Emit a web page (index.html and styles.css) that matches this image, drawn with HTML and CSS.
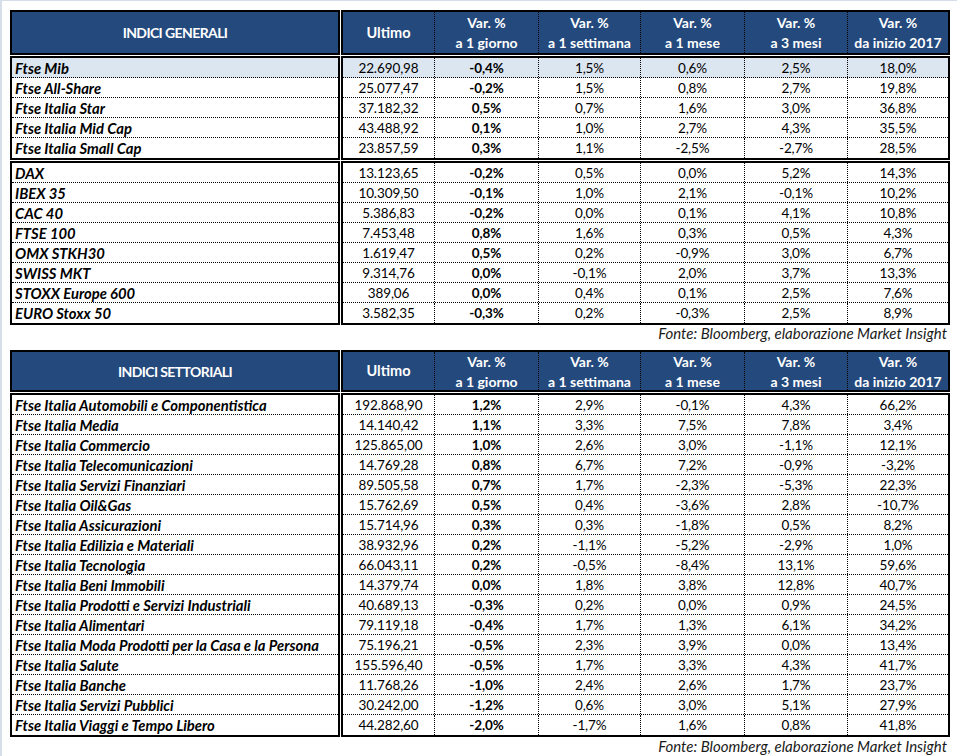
FILE: index.html
```html
<!DOCTYPE html>
<html lang="it">
<head>
<meta charset="utf-8">
<title>Indici</title>
<link rel="stylesheet" href="styles.css">
</head>
<body>
<div class="page">
  <div class="sect head h1">
    <div class="box names"><div class="title">INDICI GENERALI</div></div>
    <div class="box vals">
      <div class="hrow">
        <div class="c w1 single">Ultimo</div>
        <div class="c w2"><span>Var. %</span><span>a 1 giorno</span></div>
        <div class="c w3"><span>Var. %</span><span>a 1 settimana</span></div>
        <div class="c w4"><span>Var. %</span><span>a 1 mese</span></div>
        <div class="c w5"><span>Var. %</span><span>a 3 mesi</span></div>
        <div class="c w6"><span>Var. %</span><span>da inizio 2017</span></div>
      </div>
    </div>
  </div>
  <div class="sect">
    <div class="box names">
      <div class="row sel">Ftse Mib</div>
      <div class="row">Ftse All-Share</div>
      <div class="row">Ftse Italia Star</div>
      <div class="row">Ftse Italia Mid Cap</div>
      <div class="row">Ftse Italia Small Cap</div>
    </div>
    <div class="box vals">
      <div class="row sel"><div class="c w1">22.690,98</div><div class="c w2 b">-0,4%</div><div class="c w3">1,5%</div><div class="c w4">0,6%</div><div class="c w5">2,5%</div><div class="c w6">18,0%</div></div>
      <div class="row"><div class="c w1">25.077,47</div><div class="c w2 b">-0,2%</div><div class="c w3">1,5%</div><div class="c w4">0,8%</div><div class="c w5">2,7%</div><div class="c w6">19,8%</div></div>
      <div class="row"><div class="c w1">37.182,32</div><div class="c w2 b">0,5%</div><div class="c w3">0,7%</div><div class="c w4">1,6%</div><div class="c w5">3,0%</div><div class="c w6">36,8%</div></div>
      <div class="row"><div class="c w1">43.488,92</div><div class="c w2 b">0,1%</div><div class="c w3">1,0%</div><div class="c w4">2,7%</div><div class="c w5">4,3%</div><div class="c w6">35,5%</div></div>
      <div class="row"><div class="c w1">23.857,59</div><div class="c w2 b">0,3%</div><div class="c w3">1,1%</div><div class="c w4">-2,5%</div><div class="c w5">-2,7%</div><div class="c w6">28,5%</div></div>
    </div>
  </div>
  <div class="sect">
    <div class="box names">
      <div class="row">DAX</div>
      <div class="row">IBEX 35</div>
      <div class="row">CAC 40</div>
      <div class="row">FTSE 100</div>
      <div class="row">OMX STKH30</div>
      <div class="row">SWISS MKT</div>
      <div class="row">STOXX Europe 600</div>
      <div class="row">EURO Stoxx 50</div>
    </div>
    <div class="box vals">
      <div class="row"><div class="c w1">13.123,65</div><div class="c w2 b">-0,2%</div><div class="c w3">0,5%</div><div class="c w4">0,0%</div><div class="c w5">5,2%</div><div class="c w6">14,3%</div></div>
      <div class="row"><div class="c w1">10.309,50</div><div class="c w2 b">-0,1%</div><div class="c w3">1,0%</div><div class="c w4">2,1%</div><div class="c w5">-0,1%</div><div class="c w6">10,2%</div></div>
      <div class="row"><div class="c w1">5.386,83</div><div class="c w2 b">-0,2%</div><div class="c w3">0,0%</div><div class="c w4">0,1%</div><div class="c w5">4,1%</div><div class="c w6">10,8%</div></div>
      <div class="row"><div class="c w1">7.453,48</div><div class="c w2 b">0,8%</div><div class="c w3">1,6%</div><div class="c w4">0,3%</div><div class="c w5">0,5%</div><div class="c w6">4,3%</div></div>
      <div class="row"><div class="c w1">1.619,47</div><div class="c w2 b">0,5%</div><div class="c w3">0,2%</div><div class="c w4">-0,9%</div><div class="c w5">3,0%</div><div class="c w6">6,7%</div></div>
      <div class="row"><div class="c w1">9.314,76</div><div class="c w2 b">0,0%</div><div class="c w3">-0,1%</div><div class="c w4">2,0%</div><div class="c w5">3,7%</div><div class="c w6">13,3%</div></div>
      <div class="row"><div class="c w1">389,06</div><div class="c w2 b">0,0%</div><div class="c w3">0,4%</div><div class="c w4">0,1%</div><div class="c w5">2,5%</div><div class="c w6">7,6%</div></div>
      <div class="row"><div class="c w1">3.582,35</div><div class="c w2 b">-0,3%</div><div class="c w3">0,2%</div><div class="c w4">-0,3%</div><div class="c w5">2,5%</div><div class="c w6">8,9%</div></div>
    </div>
  </div>
  <p class="source s1">Fonte: Bloomberg, elaborazione Market Insight</p>

  <div class="sect head h2">
    <div class="box names"><div class="title">INDICI SETTORIALI</div></div>
    <div class="box vals">
      <div class="hrow">
        <div class="c w1 single">Ultimo</div>
        <div class="c w2"><span>Var. %</span><span>a 1 giorno</span></div>
        <div class="c w3"><span>Var. %</span><span>a 1 settimana</span></div>
        <div class="c w4"><span>Var. %</span><span>a 1 mese</span></div>
        <div class="c w5"><span>Var. %</span><span>a 3 mesi</span></div>
        <div class="c w6"><span>Var. %</span><span>da inizio 2017</span></div>
      </div>
    </div>
  </div>
  <div class="sect">
    <div class="box names">
      <div class="row">Ftse Italia Automobili e Componentistica</div>
      <div class="row">Ftse Italia Media</div>
      <div class="row">Ftse Italia Commercio</div>
      <div class="row">Ftse Italia Telecomunicazioni</div>
      <div class="row">Ftse Italia Servizi Finanziari</div>
      <div class="row">Ftse Italia Oil&amp;Gas</div>
      <div class="row">Ftse Italia Assicurazioni</div>
      <div class="row">Ftse Italia Edilizia e Materiali</div>
      <div class="row">Ftse Italia Tecnologia</div>
      <div class="row">Ftse Italia Beni Immobili</div>
      <div class="row">Ftse Italia Prodotti e Servizi Industriali</div>
      <div class="row">Ftse Italia Alimentari</div>
      <div class="row">Ftse Italia Moda Prodotti per la Casa e la Persona</div>
      <div class="row">Ftse Italia Salute</div>
      <div class="row">Ftse Italia Banche</div>
      <div class="row">Ftse Italia Servizi Pubblici</div>
      <div class="row">Ftse Italia Viaggi e Tempo Libero</div>
    </div>
    <div class="box vals">
      <div class="row"><div class="c w1">192.868,90</div><div class="c w2 b">1,2%</div><div class="c w3">2,9%</div><div class="c w4">-0,1%</div><div class="c w5">4,3%</div><div class="c w6">66,2%</div></div>
      <div class="row"><div class="c w1">14.140,42</div><div class="c w2 b">1,1%</div><div class="c w3">3,3%</div><div class="c w4">7,5%</div><div class="c w5">7,8%</div><div class="c w6">3,4%</div></div>
      <div class="row"><div class="c w1">125.865,00</div><div class="c w2 b">1,0%</div><div class="c w3">2,6%</div><div class="c w4">3,0%</div><div class="c w5">-1,1%</div><div class="c w6">12,1%</div></div>
      <div class="row"><div class="c w1">14.769,28</div><div class="c w2 b">0,8%</div><div class="c w3">6,7%</div><div class="c w4">7,2%</div><div class="c w5">-0,9%</div><div class="c w6">-3,2%</div></div>
      <div class="row"><div class="c w1">89.505,58</div><div class="c w2 b">0,7%</div><div class="c w3">1,7%</div><div class="c w4">-2,3%</div><div class="c w5">-5,3%</div><div class="c w6">22,3%</div></div>
      <div class="row"><div class="c w1">15.762,69</div><div class="c w2 b">0,5%</div><div class="c w3">0,4%</div><div class="c w4">-3,6%</div><div class="c w5">2,8%</div><div class="c w6">-10,7%</div></div>
      <div class="row"><div class="c w1">15.714,96</div><div class="c w2 b">0,3%</div><div class="c w3">0,3%</div><div class="c w4">-1,8%</div><div class="c w5">0,5%</div><div class="c w6">8,2%</div></div>
      <div class="row"><div class="c w1">38.932,96</div><div class="c w2 b">0,2%</div><div class="c w3">-1,1%</div><div class="c w4">-5,2%</div><div class="c w5">-2,9%</div><div class="c w6">1,0%</div></div>
      <div class="row"><div class="c w1">66.043,11</div><div class="c w2 b">0,2%</div><div class="c w3">-0,5%</div><div class="c w4">-8,4%</div><div class="c w5">13,1%</div><div class="c w6">59,6%</div></div>
      <div class="row"><div class="c w1">14.379,74</div><div class="c w2 b">0,0%</div><div class="c w3">1,8%</div><div class="c w4">3,8%</div><div class="c w5">12,8%</div><div class="c w6">40,7%</div></div>
      <div class="row"><div class="c w1">40.689,13</div><div class="c w2 b">-0,3%</div><div class="c w3">0,2%</div><div class="c w4">0,0%</div><div class="c w5">0,9%</div><div class="c w6">24,5%</div></div>
      <div class="row"><div class="c w1">79.119,18</div><div class="c w2 b">-0,4%</div><div class="c w3">1,7%</div><div class="c w4">1,3%</div><div class="c w5">6,1%</div><div class="c w6">34,2%</div></div>
      <div class="row"><div class="c w1">75.196,21</div><div class="c w2 b">-0,5%</div><div class="c w3">2,3%</div><div class="c w4">3,9%</div><div class="c w5">0,0%</div><div class="c w6">13,4%</div></div>
      <div class="row"><div class="c w1">155.596,40</div><div class="c w2 b">-0,5%</div><div class="c w3">1,7%</div><div class="c w4">3,3%</div><div class="c w5">4,3%</div><div class="c w6">41,7%</div></div>
      <div class="row"><div class="c w1">11.768,26</div><div class="c w2 b">-1,0%</div><div class="c w3">2,4%</div><div class="c w4">2,6%</div><div class="c w5">1,7%</div><div class="c w6">23,7%</div></div>
      <div class="row"><div class="c w1">30.242,00</div><div class="c w2 b">-1,2%</div><div class="c w3">0,6%</div><div class="c w4">3,0%</div><div class="c w5">5,1%</div><div class="c w6">27,9%</div></div>
      <div class="row"><div class="c w1">44.282,60</div><div class="c w2 b">-2,0%</div><div class="c w3">-1,7%</div><div class="c w4">1,6%</div><div class="c w5">0,8%</div><div class="c w6">41,8%</div></div>
    </div>
  </div>
  <p class="source s2">Fonte: Bloomberg, elaborazione Market Insight</p>
</div>
</body>
</html>
```
FILE: styles.css
```css
* { box-sizing: border-box; }
html, body { margin: 0; padding: 0; }
body {
  background: #d6deea;
  font-family: Lato, "Open Sans", sans-serif;
  font-size: 15px;
  color: #000;
  overflow: hidden;
}
.page {
  margin: 1px 0 0 2px;
  height: 755px;
  background: #fff;
  padding: 9px 0 0 8px;
}
.sect {
  display: flex;
  gap: 1px;
  margin-bottom: 1px;
}
.box { border: 2px solid #000; }
.names { width: 330px; }
.vals { width: 609px; font-size: 13.5px; letter-spacing: -0.1px; }

.row {
  display: flex;
  align-items: center;
  height: 20px;
  border-bottom: 1px dotted #000;
}
.row:last-child { border-bottom: 0; }
.names .row {
  padding-left: 3px;
  font-size: 14.8px;
  font-weight: bold;
  font-style: italic;
  white-space: nowrap;
}
.sel { background: #dce6f1; }

.c {
  height: 100%;
  display: flex;
  align-items: center;
  justify-content: center;
  border-right: 1px dotted #000;
  white-space: nowrap;
}
.w1 { width: 92px; }
.w2 { width: 104px; }
.w3 { width: 102px; }
.w4 { width: 104px; }
.w5 { width: 103px; }
.w6 { width: 100px; border-right: 0; }
.b { font-weight: bold; }

.head .box {
  background: #24497d;
  color: #fff;
  font-weight: bold;
  font-size: 14px;
  letter-spacing: 0;
}
.h1 .box { height: 45px; }
.h2 .box { height: 42px; }
.title {
  height: 100%;
  display: flex;
  align-items: center;
  justify-content: center;
  letter-spacing: -0.6px;
}
.hrow { display: flex; height: 100%; }
.hrow .c {
  flex-direction: column;
  justify-content: flex-end;
  line-height: 20px;
}
.h2 .hrow .c { justify-content: flex-start; }
.hrow .c.single { justify-content: center; font-size: 14.5px; }

.source {
  margin: 0;
  width: 940px;
  text-align: right;
  font-style: italic;
  color: #1a1a1a;
  padding-right: 3px;
}
.s1 { line-height: 15px; margin-bottom: 9px; }
.s2 { line-height: 17px; }
```
